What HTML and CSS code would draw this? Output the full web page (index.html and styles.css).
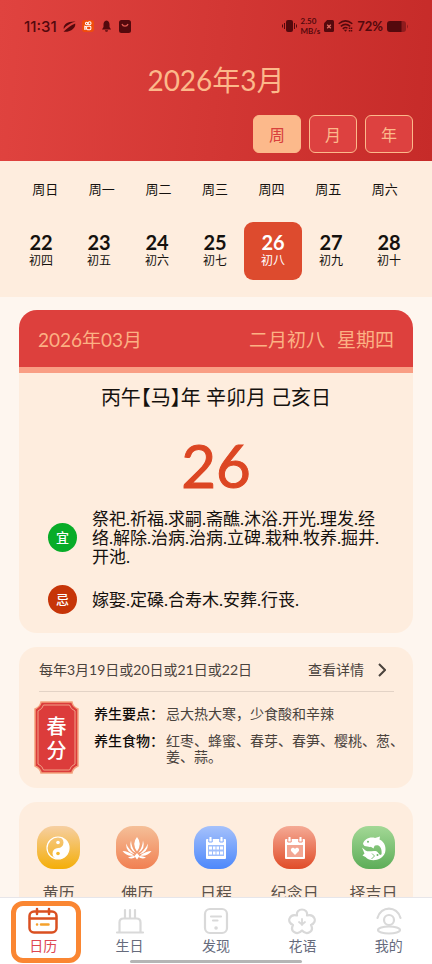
FILE: index.html
```html
<!DOCTYPE html>
<html lang="zh-CN">
<head>
<meta charset="utf-8">
<meta name="viewport" content="width=device-width, initial-scale=1">
<title>日历</title>
<link rel="stylesheet" href="styles.css">
</head>
<body>
<header class="header">
  <div class="status">
    <div class="status-group">
      <span class="clock">11:31</span>
      <svg width="13" height="13" viewBox="0 0 13 13"><path d="M.8 9C-.2 4.500 5 1 12.500 1.500C9 2.500 3.500 5 .8 9Z" fill="currentColor"/><path d="M.5 11.800C4 8 8 5.500 12.200 3.500C13 7.500 8 12.500 .5 11.800Z" fill="currentColor"/></svg>
      <svg width="12" height="12" viewBox="0 0 13 13"><rect width="13" height="13" rx="3" fill="#f04d0c"/><g fill="none" stroke="#fff" stroke-width="1.100"><circle cx="5" cy="3.800" r="1.300"/><circle cx="8.200" cy="3.600" r="1.600"/><rect x="5" y="6.700" width="4.600" height="3.800" rx="1"/><path d="M5 7.500L3 6.800V10L5 9.500"/></g></svg>
      <svg class="gap-l" width="9" height="12" viewBox="0 0 9 12"><path d="M4.500 0.500C6.800 1 7.500 2.800 7.500 4.500V7L9 9.500H0L1.500 7V4.500C1.500 2.800 2.200 1 4.500.5ZM3 10.200H6A1.500 1.500 0 0 1 3 10.200Z" fill="currentColor"/></svg>
      <svg class="gap-l" width="12" height="13" viewBox="0 0 12 13"><rect width="12" height="13" rx="2.500" fill="currentColor"/><path d="M3 4C4 6.800 8 6.800 9 4" fill="none" stroke="#e05a52" stroke-width="1.300"/></svg>
    </div>
    <div class="status-group status-right">
      <svg width="15" height="12" viewBox="0 0 15 12"><rect x="4" width="7" height="12" rx="2" fill="currentColor"/><path d="M2.500 3V9M.5 4.500V7.500M12.500 3V9M14.500 4.500V7.500" stroke="currentColor"/></svg>
      <span class="speed"><b>2.50</b><b>MB/s</b></span>
      <svg width="10" height="12" viewBox="0 0 10 12"><path d="M3.200 0H8.500Q10 0 10 1.500V10.500Q10 12 8.500 12H1.500Q0 12 0 10.500V3.200Z" fill="currentColor"/><path d="M3.200 4.700L6.800 8.300M6.800 4.700L3.200 8.300" stroke="#e06a60" stroke-width="1.300"/></svg>
      <svg width="15" height="12" viewBox="0 0 15 12" fill="none" stroke="currentColor" stroke-width="1.500"><path d="M.7 3.800Q7.500-2 14.300 3.800M2.800 6.300Q7.500 2.400 12.200 6.300M4.800 8.800Q7.500 6.600 9.500 8.300"/><path d="M5.800 9.800L7.500 11.800L9.200 9.800Z" fill="currentColor" stroke="none"/><path d="M11.500 7.500V11.500M13.500 7.500V11.500" stroke-dasharray="1.500 1"/></svg>
      <span class="percent">72%</span>
      <svg width="21" height="11" viewBox="0 0 21 11"><path d="M3 0H16A3 3 0 0 1 19 3V8A3 3 0 0 1 16 11H3Z" fill="#8f1c1e"/><path d="M3 0H14.500V11H3A3 3 0 0 1 0 8V3A3 3 0 0 1 3 0Z" fill="currentColor"/><path d="M20 3.500Q22 5.500 20 7.500Z" fill="#8f1c1e"/></svg>
    </div>
  </div>
  <h1 class="title">2026年3月</h1>
  <div class="modes">
    <button class="mode mode-on" type="button">周</button>
    <button class="mode" type="button">月</button>
    <button class="mode" type="button">年</button>
  </div>
</header>

<main class="content">
  <section class="week">
    <div class="weekdays"><span>周日</span><span>周一</span><span>周二</span><span>周三</span><span>周四</span><span>周五</span><span>周六</span></div>
    <div class="days">
      <button class="day" type="button"><b>22</b><span>初四</span></button>
      <button class="day" type="button"><b>23</b><span>初五</span></button>
      <button class="day" type="button"><b>24</b><span>初六</span></button>
      <button class="day" type="button"><b>25</b><span>初七</span></button>
      <button class="day day-on" type="button"><b>26</b><span>初八</span></button>
      <button class="day" type="button"><b>27</b><span>初九</span></button>
      <button class="day" type="button"><b>28</b><span>初十</span></button>
    </div>
  </section>

  <section class="card almanac">
    <div class="almanac-head">
      <span>2026年03月</span>
      <span class="lunar"><span>二月初八</span><span>星期四</span></span>
    </div>
    <p class="ganzhi">丙午【马】年 辛卯月 己亥日</p>
    <p class="big-day">26</p>
    <div class="advice">
      <span class="mark mark-good">宜</span>
      <p>祭祀.祈福.求嗣.斋醮.沐浴.开光.理发.经络.解除.治病.治病.立碑.栽种.牧养.掘井.开池.</p>
    </div>
    <div class="advice">
      <span class="mark mark-bad">忌</span>
      <p>嫁娶.定磉.合寿木.安葬.行丧.</p>
    </div>
  </section>

  <section class="card term">
    <div class="term-head">
      <span>每年3月19日或20日或21日或22日</span>
      <a class="more" href="#">查看详情
        <svg width="8" height="14" viewBox="0 0 8 14"><path d="M1 1L7 7L1 13" fill="none" stroke="currentColor" stroke-width="2"/></svg>
      </a>
    </div>
    <div class="term-body">
      <div class="plaque">
        <svg class="plaque-frame" viewBox="0 0 45 73"><path d="M7 1H38Q38.500 5.500 44 8V65Q38.500 67.500 38 72H7Q6.500 67.500 1 65V8Q6.500 5.500 7 1Z" fill="#dc3c3b" stroke="#f3a27e" stroke-width="1.500"/><path d="M9.500 4H35.500Q36.500 8 41 10V63Q36.500 65 35.500 69H9.500Q8.500 65 4 63V10Q8.500 8 9.500 4Z" fill="none" stroke="#f0a187"/></svg>
        <span>春</span><span>分</span>
      </div>
      <dl class="tips">
        <dt>养生要点：</dt><dd>忌大热大寒，少食酸和辛辣</dd>
        <dt>养生食物：</dt><dd>红枣、蜂蜜、春芽、春笋、樱桃、葱、姜、蒜。</dd>
      </dl>
    </div>
  </section>

  <section class="card tools">
    <a class="tool" href="#">
      <span class="tile tile-gold"><svg width="24" height="24" viewBox="0 0 24 24"><circle cx="12" cy="12" r="11" fill="none" stroke="#fff" stroke-width="1.200"/><path d="M12 1A11 11 0 0 1 12 23A5.500 5.500 0 0 1 12 12A5.500 5.500 0 0 0 12 1Z" fill="#fff"/><circle cx="12" cy="6.500" r="1.800" fill="#fff"/><circle cx="12" cy="17.500" r="1.800" fill="#f5b82d"/></svg></span>
      <span>黄历</span>
    </a>
    <a class="tool" href="#">
      <span class="tile tile-orange"><svg width="30" height="24" viewBox="0 0 30 24" fill="#fff"><path d="M15 1Q20.500 7.500 15 15.500Q9.500 7.500 15 1Z"/><path d="M9 4.500Q9.500 12 14 17Q6 13 9 4.500Z"/><path d="M21 4.500Q20.500 12 16 17Q24 13 21 4.500Z"/><path d="M4 7.500Q7 14 13 18.500Q4 16.500 4 7.500Z"/><path d="M26 7.500Q23 14 17 18.500Q26 16.500 26 7.500Z"/><path d="M.5 15Q6 15 12 19.500Q5 21 .5 15Z"/><path d="M29.500 15Q24 15 18 19.500Q25 21 29.500 15Z"/><path d="M6 21.500Q11 19 14 20.500Q10 24 6 21.500Z"/><path d="M24 21.500Q19 19 16 20.500Q20 24 24 21.500Z"/><path d="M15 17L17.500 20L15 23.500L12.500 20Z"/></svg></span>
      <span>佛历</span>
    </a>
    <a class="tool" href="#">
      <span class="tile tile-blue"><svg width="22" height="24" viewBox="0 0 22 24"><path d="M2 3H20Q21 3 21 4V22Q21 23 20 23H2Q1 23 1 22V4Q1 3 2 3Z" fill="#fff"/><path d="M5.500 1V5M16.500 1V5" stroke="#fff" stroke-width="2"/><path d="M3.800 3V6H7.200V3M14.800 3V6H18.200V3" fill="none" stroke="#7fa9fb"/><rect x="3" y="9" width="16" height="11" fill="#a0bffc"/><path d="M4 12H7M8 12H10.500M11.500 12H14M15 12H18M4 17H7M8 17H10.500M11.500 17H14M15 17H18" stroke="#fff" stroke-width="3"/></svg></span>
      <span>日程</span>
    </a>
    <a class="tool" href="#">
      <span class="tile tile-red"><svg width="22" height="24" viewBox="0 0 22 24"><path d="M2 3H20Q21 3 21 4V22Q21 23 20 23H2Q1 23 1 22V4Q1 3 2 3Z" fill="#fff"/><path d="M5.500 1V5M16.500 1V5" stroke="#fff" stroke-width="2"/><path d="M3.800 3V6H7.200V3M14.800 3V6H18.200V3" fill="none" stroke="#ef8b76"/><rect x="3" y="9" width="16" height="12" fill="#f3a693"/><path d="M11 19L7.300 15.200C5.700 12.500 9.500 10.500 11 13C12.500 10.500 16.300 12.500 14.700 15.200Z" fill="#fff"/></svg></span>
      <span>纪念日</span>
    </a>
    <a class="tool" href="#">
      <span class="tile tile-green"><svg width="26" height="26" viewBox="0 0 26 26"><path d="M2 9C3 4 9 1.500 14 3L19 1.500L18.500 4.500C24 7 25.500 13 24 18L20.500 20C21 16 20.500 12.500 17.500 10.500C13 9.500 11 13 6.500 11.500L3.500 11Z" fill="#fff"/><path d="M1 12.500L4.500 15.500C8 17.500 12 15 16 16.500L19 20L24 18C20 26.500 9 27 4.500 22L1.500 20.500L3.500 18.500Z" fill="#fff"/><path d="M8 10.500L12.500 13.500L14 9.500Z" fill="#fff"/><path d="M11 18.500L13.500 21L10.500 24" fill="none" stroke="#7cbf77"/><circle cx="7" cy="6.800" r="1" fill="#75bd70"/><circle cx="16.500" cy="20" r="1" fill="#6ab565"/></svg></span>
      <span>择吉日</span>
    </a>
  </section>
</main>

<nav class="tabs">
  <a class="tab tab-on" href="#">
    <svg width="30" height="28" viewBox="0 0 30 28" fill="none" stroke="#da5021" stroke-width="2.500" stroke-linecap="round"><rect x="1.500" y="4.500" width="27" height="21" rx="4.500"/><path d="M2 11.500H28M9 2V7M21 2V7"/><path d="M13 17.500H20.500M9 17.500H9.100" stroke="#f5a12c"/></svg>
    <span>日历</span>
  </a>
  <a class="tab" href="#">
    <svg width="30" height="28" viewBox="0 0 30 28" fill="none" stroke="#d9d9d9" stroke-width="2.200" stroke-linecap="round"><path d="M2 25.500H28M4.500 25V15.500Q4.500 11.500 8.500 11.500H21.500Q25.500 11.500 25.500 15.500V25M10 3V11M15 3V11M20 3V11"/></svg>
    <span>生日</span>
  </a>
  <a class="tab" href="#">
    <svg width="30" height="28" viewBox="0 0 30 28" fill="none" stroke="#d9d9d9" stroke-width="2.200" stroke-linecap="round"><rect x="4" y="2" width="22" height="24" rx="5"/><path d="M10 9.500H20M12 13.500H16.500"/><path d="M15 21H15.100" stroke-width="3.500"/></svg>
    <span>发现</span>
  </a>
  <a class="tab" href="#">
    <svg width="30" height="28" viewBox="0 0 30 28" fill="none" stroke="#d9d9d9" stroke-width="2.200" stroke-linecap="round" stroke-linejoin="round"><path d="M10 8.500C8.500 .5 21.500 .5 20 8.500C27.500 6.500 31 15 24 18C27.500 25 19.500 28.500 15 23.500C10.500 28.500 2.500 25 6 18C-1 15 2.500 6.500 10 8.500Z"/><path d="M15 12V18M12 15L15 17.500L18 15" stroke-width="1.800"/></svg>
    <span>花语</span>
  </a>
  <a class="tab" href="#">
    <svg width="30" height="28" viewBox="0 0 30 28" fill="none" stroke="#d9d9d9" stroke-width="2.200" stroke-linecap="round"><path d="M3.500 11C7-1.500 23-1.500 26.500 11"/><circle cx="15" cy="13" r="5"/><ellipse cx="15" cy="23" rx="11" ry="3.500"/></svg>
    <span>我的</span>
  </a>
  <span class="home-bar"></span>
</nav>
</body>
</html>
```
FILE: styles.css
```css
* {
  box-sizing: border-box;
  margin: 0;
  padding: 0;
}

body {
  display: flex;
  flex-direction: column;
  height: 100vh;
  overflow: hidden;
  background: #fef6ef;
  color: #15110e;
  font-family: Lato, "Noto Sans CJK SC", sans-serif;
}

a {
  color: inherit;
  text-decoration: none;
}

button {
  border: 0;
  background: none;
  color: inherit;
  font: inherit;
}

svg {
  display: block;
  flex: none;
}

.header {
  flex: none;
  padding: 16px 19px 8px;
  background: linear-gradient(95deg, #e0433f, #c62b29);
}

.status {
  display: flex;
  justify-content: space-between;
  height: 20px;
  padding: 0 5px;
  color: #54090d;
}

.status-group {
  display: flex;
  align-items: center;
  gap: 6px;
}

.status-right {
  gap: 4px;
}

.clock {
  font-family: Inter, sans-serif;
  font-size: 15px;
  font-weight: 500;
}

.gap-l {
  margin-left: 2px;
}

.speed {
  display: flex;
  flex-direction: column;
  font-size: 8px;
  line-height: 10px;
}

.percent {
  font-size: 13px;
  font-weight: 700;
}

.title {
  margin-top: 24px;
  color: #fcb98b;
  font-size: 28px;
  font-weight: 400;
  line-height: 40px;
  text-align: center;
}

.modes {
  display: flex;
  justify-content: flex-end;
  gap: 8px;
  margin-top: 15px;
}

.mode {
  width: 48px;
  height: 38px;
  border: 1px solid #fcb98b;
  border-radius: 6px;
  background: #dd4140;
  color: #fcb98b;
  font-size: 16px;
}

.mode-on {
  background: #fcb98b;
  color: #d8403c;
}

.content {
  flex: 1;
  min-height: 0;
  overflow-y: auto;
  scrollbar-width: none;
}

.week {
  padding: 18px 14px 17px 12px;
  background: #feedde;
}

.weekdays {
  display: grid;
  grid-template-columns: repeat(7, 1fr);
  padding: 0 5px;
  font-size: 13px;
  line-height: 20px;
  text-align: center;
}

.days {
  display: grid;
  grid-template-columns: repeat(7, 1fr);
  margin-top: 23px;
}

.day {
  display: flex;
  flex-direction: column;
  align-items: center;
  justify-content: center;
  height: 58px;
  border-radius: 9px;
  font-size: 12px;
  line-height: 18px;
}

.day b {
  font-size: 20px;
  line-height: 20px;
}

.day-on {
  background: #dd4b2e;
  color: #fff;
}

.card {
  margin: 14px 19px 0;
  border-radius: 18px;
  background: #feedde;
}

.almanac {
  margin-top: 13px;
  padding-bottom: 19px;
  overflow: hidden;
}

.almanac-head {
  display: flex;
  justify-content: space-between;
  padding: 16px 19px 13px;
  border-bottom: 6px solid #f99e84;
  background: #dd403d;
  color: #fcb184;
  font-size: 19px;
  line-height: 28px;
}

.lunar {
  display: flex;
  gap: 12px;
}

.ganzhi {
  margin-top: 10px;
  font-size: 20px;
  font-weight: 400;
  font-feature-settings: "halt";
  line-height: 28px;
  text-align: center;
}

.big-day {
  margin-top: 23px;
  color: #dc4623;
  font-size: 60px;
  font-weight: 400;
  line-height: 62px;
  text-align: center;
  -webkit-text-stroke: 1px currentColor;
}

.advice {
  display: flex;
  align-items: center;
  gap: 15px;
  min-height: 30px;
  margin: 13px 29px 0;
  font-size: 17px;
  line-height: 19px;
}

.advice + .advice {
  margin-top: 18px;
}

.mark {
  flex: none;
  width: 29px;
  border-radius: 50%;
  color: #fff;
  font-size: 13px;
  font-weight: 500;
  line-height: 29px;
  text-align: center;
}

.mark-good {
  background: #08ac28;
}

.mark-bad {
  background: #c63508;
}

.term {
  padding: 12px 8px 14px 15px;
  color: #4a433d;
  font-size: 14px;
}

.term-head {
  display: flex;
  justify-content: space-between;
  margin: 0 11px 0 5px;
  padding-bottom: 11px;
  border-bottom: 1px solid #e3d3c6;
  line-height: 21px;
}

.more {
  display: flex;
  align-items: center;
  gap: 14px;
  padding-right: 8px;
}

.term-body {
  display: flex;
  gap: 15px;
  margin-top: 9px;
}

.plaque {
  position: relative;
  display: flex;
  flex: none;
  flex-direction: column;
  align-items: center;
  justify-content: center;
  width: 45px;
  height: 73px;
  color: #fff;
  font-size: 20px;
  font-weight: 500;
  line-height: 24px;
}

.plaque span {
  position: relative;
}

.plaque-frame {
  position: absolute;
  inset: 0;
}

.tips {
  display: grid;
  flex: 1;
  grid-template-columns: auto 1fr;
  align-content: start;
  gap: 11px 2px;
  padding-top: 5px;
  line-height: 16px;
}

.tips dt {
  color: #0e0b09;
  font-weight: 500;
}

.tools {
  display: grid;
  grid-template-columns: repeat(5, 1fr);
  padding: 24px 0 20px;
}

.tool {
  display: flex;
  flex-direction: column;
  align-items: center;
  gap: 12px;
  color: #5b524b;
  font-size: 16px;
  line-height: 24px;
}

.tile {
  display: grid;
  place-items: center;
  width: 43px;
  height: 43px;
  border-radius: 17px;
}

.tile-gold {
  background: linear-gradient(#f6cfa2, #f4ae08);
}

.tile-orange {
  background: linear-gradient(#f5bf98, #f18052);
}

.tile-blue {
  background: linear-gradient(#a5c1fb, #4d88fb);
}

.tile-red {
  background: linear-gradient(#f5aa95, #e04c28);
}

.tile-green {
  background: linear-gradient(#a3d896, #5dad58);
}

.tabs {
  position: relative;
  display: grid;
  flex: none;
  grid-template-columns: repeat(5, 1fr);
  padding: 9px 0 8px;
  border-top: 1px solid #e7e6ea;
  background: #fff;
}

.tab {
  position: relative;
  display: flex;
  flex-direction: column;
  align-items: center;
  gap: 1px;
  color: #666b7c;
  font-size: 14px;
  line-height: 20px;
}

.tab-on {
  color: #dd4650;
}

.tab-on::after {
  content: "";
  position: absolute;
  inset: -6px 5px -7px 11px;
  border: 5px solid #fa8632;
  border-radius: 12px;
}

.home-bar {
  position: absolute;
  bottom: 1px;
  left: 30%;
  width: 40%;
  height: 3px;
  border-radius: 2px;
  background: #b5b5b5;
}
```
